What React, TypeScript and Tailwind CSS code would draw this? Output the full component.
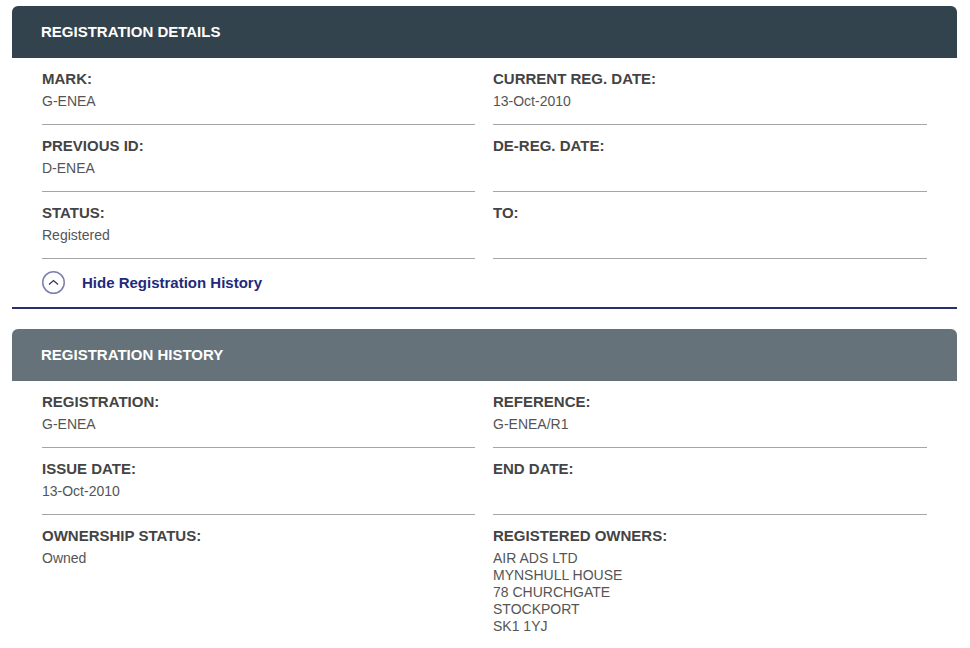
const Field = ({
  label,
  value,
  last,
}: {
  label: string;
  value?: string | string[];
  last?: boolean;
}) => {
  const lines = Array.isArray(value) ? value : value ? [value] : [];
  return (
    <div className={last ? "pt-[11px]" : "h-[67px] pt-[11px] border-b border-[#a6a6a6]"}>
      <div className="text-[15px] leading-[20px] font-bold text-[#444444]">{label}</div>
      <div className="mt-[4px] text-[14px] leading-[17px] text-[#555555]">
        {lines.map((line) => (
          <div key={line}>{line}</div>
        ))}
      </div>
    </div>
  );
};

const Header = ({ title, color }: { title: string; color: string }) => (
  <div
    className={`h-[52px] rounded-t-[6px] pl-[29px] flex items-center text-[15px] font-bold text-white ${color}`}
  >
    {title}
  </div>
);

export default function App() {
  return (
    <div className="w-[970px] h-[648px] overflow-hidden bg-white px-[12px] pr-[13px] pt-[6px] font-['Liberation_Sans',Arial,sans-serif]">
      <Header title="REGISTRATION DETAILS" color="bg-[#33434e]" />
      <div className="grid grid-cols-[433px_434px] gap-x-[18px] px-[30px]">
        <Field label="MARK:" value="G-ENEA" />
        <Field label="CURRENT REG. DATE:" value="13-Oct-2010" />
        <Field label="PREVIOUS ID:" value="D-ENEA" />
        <Field label="DE-REG. DATE:" />
        <Field label="STATUS:" value="Registered" />
        <Field label="TO:" />
      </div>
      <div className="h-[50px] pb-[2px] pl-[30px] flex items-center gap-[17px] border-b-2 border-[#2a2f6e]">
        <svg width="23" height="23" viewBox="0 0 23 23" fill="none">
          <circle cx="11.5" cy="11.5" r="10.75" stroke="#7d7fb0" strokeWidth="1.5" />
          <path d="M7 13.5 L11.5 9.5 L16 13.5" stroke="#33364f" strokeWidth="1.3" />
        </svg>
        <span className="pt-[2px] text-[15px] font-bold text-[#1f2a7a]">Hide Registration History</span>
      </div>
      <div className="mt-[20px]">
        <Header title="REGISTRATION HISTORY" color="bg-[#66727a]" />
        <div className="grid grid-cols-[433px_434px] gap-x-[18px] px-[30px]">
          <Field label="REGISTRATION:" value="G-ENEA" />
          <Field label="REFERENCE:" value="G-ENEA/R1" />
          <Field label="ISSUE DATE:" value="13-Oct-2010" />
          <Field label="END DATE:" />
          <Field label="OWNERSHIP STATUS:" value="Owned" last />
          <Field
            label="REGISTERED OWNERS:"
            value={["AIR ADS LTD", "MYNSHULL HOUSE", "78 CHURCHGATE", "STOCKPORT", "SK1 1YJ"]}
            last
          />
        </div>
      </div>
    </div>
  );
}
